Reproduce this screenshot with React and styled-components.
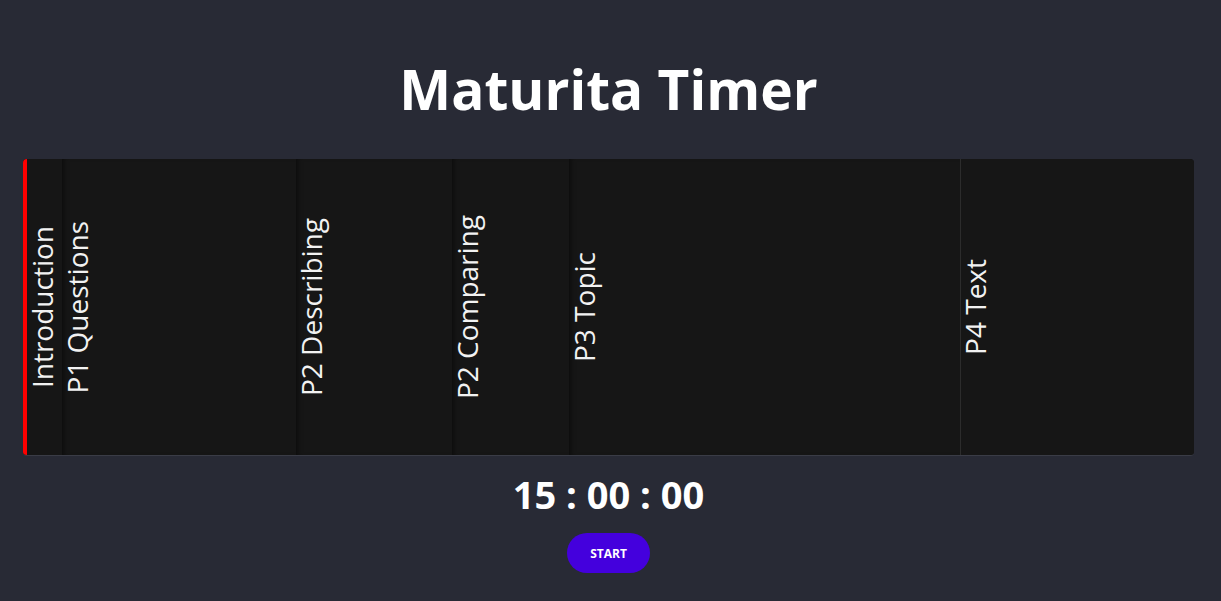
import React from 'react'
import styled, { createGlobalStyle } from 'styled-components'

const parts = [
  { name: 'Introduction', minutes: 0.5 },
  { name: 'P1 Questions', minutes: 3 },
  { name: 'P2 Describing', minutes: 2 },
  { name: 'P2 Comparing', minutes: 1.5 },
  { name: 'P3 Topic', minutes: 5 },
  { name: 'P4 Text', minutes: 3 },
]

function App() {
  return (
    <Page>
      <GlobalStyle />
      <Title>Maturita Timer</Title>
      <Timeline>
        {parts.map((p, i) => (
          <Segment key={p.name} $grow={p.minutes} $active={i === 0} $last={i === parts.length - 1}>
            <Label $active={i === 0}>{p.name}</Label>
          </Segment>
        ))}
      </Timeline>
      <Clock>15 : 00 : 00</Clock>
      <StartButton type="button">START</StartButton>
    </Page>
  )
}

const GlobalStyle = createGlobalStyle`
  html, body {
    margin: 0;
    background: #282a35;
  }
`

const Page = styled.div`
  min-height: 601px;
  background: #282a35;
  color: white;
  font-family: 'Open Sans', 'Noto Sans', sans-serif;
  display: flex;
  flex-direction: column;
  align-items: center;
  padding: 56px 4px 0 0;
  box-sizing: border-box;
`

const Title = styled.h1`
  margin: 0;
  font-size: 55px;
  font-weight: 700;
  line-height: 66px;
`

const Timeline = styled.div`
  align-self: stretch;
  margin: 37px 23px 0;
  height: 296px;
  display: flex;
  border-radius: 4px;
  overflow: hidden;
  background: #151515;
  border-bottom: 1px solid #3a3c46;
`

const Segment = styled.div`
  flex: ${p => p.$grow} 1 0;
  min-width: 0;
  display: flex;
  align-items: center;
  background: #161616;
  box-shadow: ${p =>
    p.$active
      ? 'inset 4px 0 0 #ff0000'
      : p.$last
        ? 'inset 1px 0 0 #2c2c2c'
        : 'inset 5px 0 5px -3px rgba(0, 0, 0, 0.45)'};
`

const Label = styled.span`
  writing-mode: vertical-rl;
  transform: rotate(180deg);
  margin-left: ${p => (p.$active ? '5px' : '1px')};
  font-size: 28px;
  line-height: 28px;
  white-space: nowrap;
  color: #f2f2f2;
`

const Clock = styled.div`
  margin-top: 12px;
  font-size: 38px;
  font-weight: 700;
  line-height: 52px;
`

const StartButton = styled.button`
  margin-top: 13px;
  width: 83px;
  height: 40px;
  border: none;
  border-radius: 20px;
  background: #4400dd;
  color: white;
  font-family: 'Open Sans', 'Noto Sans', sans-serif;
  font-size: 12px;
  font-weight: 700;
  cursor: pointer;
`

export default App
